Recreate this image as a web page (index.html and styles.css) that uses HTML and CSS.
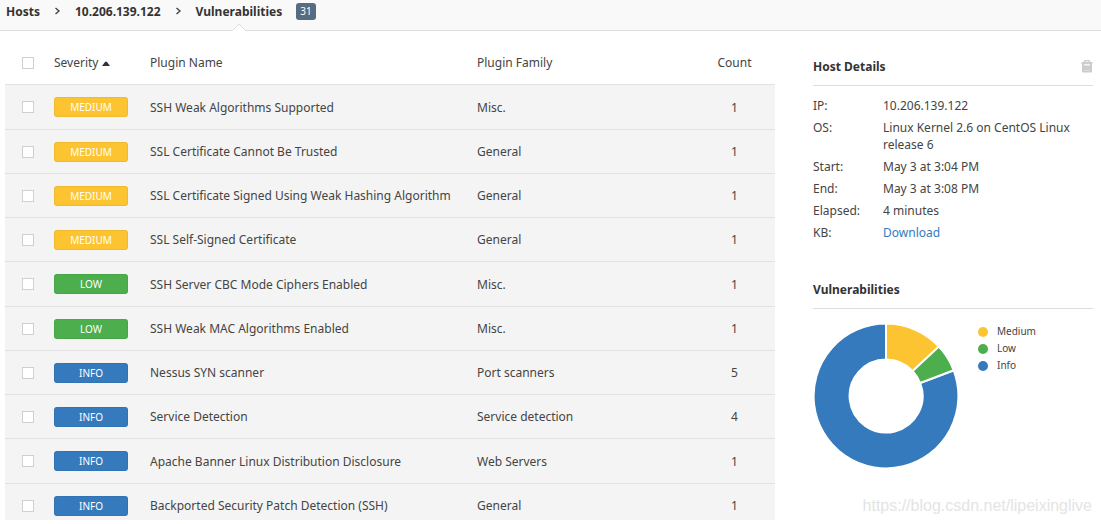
FILE: index.html
```html
<!DOCTYPE html>
<html lang="en">
<head>
<meta charset="utf-8">
<title>Vulnerabilities</title>
<link rel="stylesheet" href="styles.css">
</head>
<body>
<div class="app">
  <nav class="crumbs" aria-label="Breadcrumb">
    <a class="crumb" href="#">Hosts</a>
    <svg class="chevron" viewBox="0 0 6 8" aria-hidden="true"><path d="M1 1l3.5 3L1 7"/></svg>
    <a class="crumb" href="#">10.206.139.122</a>
    <svg class="chevron" viewBox="0 0 6 8" aria-hidden="true"><path d="M1 1l3.5 3L1 7"/></svg>
    <a class="crumb crumb-active" href="#" aria-current="page">Vulnerabilities<svg class="notch" viewBox="0 0 14 8" aria-hidden="true"><path class="notch-fill" d="M0 8L7 1l7 7z"/><path class="notch-line" d="M0.5 7.5L7 1l6.500 6.500"/></svg></a>
    <span class="total">31</span>
  </nav>
  <main class="content">
    <table class="vulns">
      <colgroup><col class="col-check"><col class="col-severity"><col class="col-name"><col class="col-family"><col class="col-count"></colgroup>
      <thead>
        <tr><th><input class="check" type="checkbox" aria-label="Select all"></th><th>Severity <svg class="sort" viewBox="0 0 8 5" aria-hidden="true"><path d="M0 5L3 1Q4 0 5 1L8 5z"/></svg></th><th>Plugin Name</th><th>Plugin Family</th><th class="count">Count</th></tr>
      </thead>
      <tbody>
        <tr><td><input class="check" type="checkbox" aria-label="Select row"></td><td><span class="badge medium">MEDIUM</span></td><td>SSH Weak Algorithms Supported</td><td>Misc.</td><td class="count">1</td></tr>
        <tr><td><input class="check" type="checkbox" aria-label="Select row"></td><td><span class="badge medium">MEDIUM</span></td><td>SSL Certificate Cannot Be Trusted</td><td>General</td><td class="count">1</td></tr>
        <tr><td><input class="check" type="checkbox" aria-label="Select row"></td><td><span class="badge medium">MEDIUM</span></td><td>SSL Certificate Signed Using Weak Hashing Algorithm</td><td>General</td><td class="count">1</td></tr>
        <tr><td><input class="check" type="checkbox" aria-label="Select row"></td><td><span class="badge medium">MEDIUM</span></td><td>SSL Self-Signed Certificate</td><td>General</td><td class="count">1</td></tr>
        <tr><td><input class="check" type="checkbox" aria-label="Select row"></td><td><span class="badge low">LOW</span></td><td>SSH Server CBC Mode Ciphers Enabled</td><td>Misc.</td><td class="count">1</td></tr>
        <tr><td><input class="check" type="checkbox" aria-label="Select row"></td><td><span class="badge low">LOW</span></td><td>SSH Weak MAC Algorithms Enabled</td><td>Misc.</td><td class="count">1</td></tr>
        <tr><td><input class="check" type="checkbox" aria-label="Select row"></td><td><span class="badge info">INFO</span></td><td>Nessus SYN scanner</td><td>Port scanners</td><td class="count">5</td></tr>
        <tr><td><input class="check" type="checkbox" aria-label="Select row"></td><td><span class="badge info">INFO</span></td><td>Service Detection</td><td>Service detection</td><td class="count">4</td></tr>
        <tr><td><input class="check" type="checkbox" aria-label="Select row"></td><td><span class="badge info">INFO</span></td><td>Apache Banner Linux Distribution Disclosure</td><td>Web Servers</td><td class="count">1</td></tr>
        <tr><td><input class="check" type="checkbox" aria-label="Select row"></td><td><span class="badge info">INFO</span></td><td>Backported Security Patch Detection (SSH)</td><td>General</td><td class="count">1</td></tr>
      </tbody>
    </table>
    <aside class="side">
      <section>
        <header class="side-head">
          <h2 class="side-title">Host Details</h2>
          <button class="trash" type="button" aria-label="Delete host"><svg viewBox="0 0 12 13" aria-hidden="true"><path fill-rule="evenodd" d="M3.500 0h5l1 2H11.500v2H11v7.500Q11 12.500 10 12.500H2Q1 12.500 1 11.500V4H.5V2h2zM4.500 1.200L4.200 2h3.600l-.3-.8zM3 4.200v1.300h6V4.200z"/><path class="trash-lines" d="M3 10.500h6"/></svg></button>
        </header>
        <dl class="details">
          <dt>IP:</dt><dd>10.206.139.122</dd>
          <dt>OS:</dt><dd>Linux Kernel 2.6 on CentOS Linux release 6</dd>
          <dt>Start:</dt><dd>May 3 at 3:04 PM</dd>
          <dt>End:</dt><dd>May 3 at 3:08 PM</dd>
          <dt>Elapsed:</dt><dd>4 minutes</dd>
          <dt>KB:</dt><dd><a class="link" href="#">Download</a></dd>
        </dl>
      </section>
      <section>
        <header class="side-head">
          <h2 class="side-title">Vulnerabilities</h2>
        </header>
        <div class="chart">
          <svg class="donut" viewBox="-73 -73 146 146" role="img" aria-label="Vulnerabilities by severity">
            <path class="slice info-fill" d="M67.700 -25.700A72.400 72.400 0 1 1 0 -72.400V-36.500A36.500 36.500 0 1 0 34.200 -13z"/>
            <path class="slice medium-fill" d="M0 -72.400A72.400 72.400 0 0 1 52.900 -49.400L26.700 -24.900A36.500 36.500 0 0 0 0 -36.500z"/>
            <path class="slice low-fill" d="M52.900 -49.400A72.400 72.400 0 0 1 67.700 -25.700L34.200 -13A36.500 36.500 0 0 0 26.700 -24.900z"/>
          </svg>
          <ul class="legend">
            <li><span class="dot medium"></span>Medium</li>
            <li><span class="dot low"></span>Low</li>
            <li><span class="dot info"></span>Info</li>
          </ul>
        </div>
      </section>
    </aside>
  </main>
  <div class="watermark">https://blog.csdn.net/lipeixinglive</div>
</div>
</body>
</html>
```
FILE: styles.css
```css
* { box-sizing: border-box; }
body {
  margin: 0;
  background: #fff;
  color: #444;
  font: 12px/17px "Noto Sans", "Open Sans", sans-serif;
}
.app {
  position: relative;
  display: flex;
  flex-direction: column;
  height: 100vh;
  padding-bottom: 4px;
  overflow: hidden;
}
.crumbs {
  display: flex;
  flex: none;
  align-items: center;
  gap: 14px;
  height: 31px;
  padding: 0 6px 8px;
  background: #f9f9f9;
  border-bottom: 1px solid #ddd;
}
.crumb { color: #333; font-weight: 700; text-decoration: none; }
.crumb-active { position: relative; }
.chevron { width: 7px; height: 8px; fill: none; stroke: #444; stroke-width: 1.4; }
.notch { position: absolute; left: 50%; bottom: -11px; width: 14px; height: 8px; margin-left: -7px; }
.notch-fill { fill: #fff; }
.notch-line { fill: none; stroke: #ddd; }
.total {
  padding: 0 4px;
  border-radius: 3px;
  background: #566c80;
  color: #fff;
  font-size: 10px;
  line-height: 17px;
}
.content {
  display: grid;
  flex: 1;
  grid-template-columns: 1fr 280px;
  gap: 38px;
  align-items: start;
  min-height: 0;
  padding: 10px 8px 0 5px;
  overflow: hidden;
}
.vulns { width: 100%; border-collapse: separate; border-spacing: 0; table-layout: fixed; }
.col-check { width: 49px; }
.col-severity { width: 96px; }
.col-name { width: 327px; }
.col-count { width: 81px; }
.vulns th, .vulns td {
  height: 44px;
  padding: 0;
  border-bottom: 1px solid #e2e2e2;
  font-weight: 400;
  text-align: left;
  vertical-align: middle;
}
.vulns tbody { background: #f4f4f4; }
.vulns tbody tr:nth-child(4n+1) td { height: 45px; }
.vulns .count { text-align: center; }
.check {
  display: block;
  width: 12px;
  height: 12px;
  margin: 0 0 0 17px;
  appearance: none;
  background: #fff;
  border: 1px solid #d0d0d0;
}
.check:checked { background: #377bbd; }
.sort { width: 8px; height: 5px; vertical-align: middle; fill: #333; }
.badge {
  display: block;
  width: 74px;
  border-radius: 3px;
  box-shadow: inset 0 0 0 1px rgba(0, 0, 0, .05);
  color: #fff;
  font-size: 10px;
  line-height: 20px;
  text-align: center;
}
.medium { background: #fdc431; }
.low { background: #4cae4c; }
.info { background: #357abd; }
.side { display: flex; flex-direction: column; gap: 40px; }
.side-head {
  display: flex;
  align-items: center;
  justify-content: space-between;
  padding: 0 0 10px;
  border-bottom: 1px solid #ddd;
}
.side section:first-child .side-head { padding-top: 17px; }
.side-title { margin: 0; color: #333; font-size: 12px; line-height: 17px; }
.trash { width: 12px; height: 13px; padding: 0; border: 0; background: none; }
.trash svg { display: block; fill: #ccc; }
.trash-lines { stroke: #ddd; }
.details {
  display: grid;
  grid-template-columns: 70px 1fr;
  row-gap: 5px;
  margin: 11px 0 0;
}
.details dd { margin: 0; }
.link { color: #357abd; text-decoration: none; }
.chart { display: flex; gap: 19px; padding-top: 14px; }
.donut { width: 146px; height: 146px; }
.slice { stroke: #fff; stroke-width: 2; }
.medium-fill { fill: #fdc431; }
.low-fill { fill: #4cae4c; }
.info-fill { fill: #357abd; }
.legend { margin: 0; padding: 0; list-style: none; font-size: 10px; line-height: 17px; }
.legend li { display: flex; align-items: center; gap: 9px; }
.dot { width: 10px; height: 10px; border-radius: 50%; }
.watermark {
  position: absolute;
  right: 9px;
  bottom: 8px;
  color: #e4e4e4;
  font: 16px/20px "Liberation Sans", Arial, sans-serif;
}
```
